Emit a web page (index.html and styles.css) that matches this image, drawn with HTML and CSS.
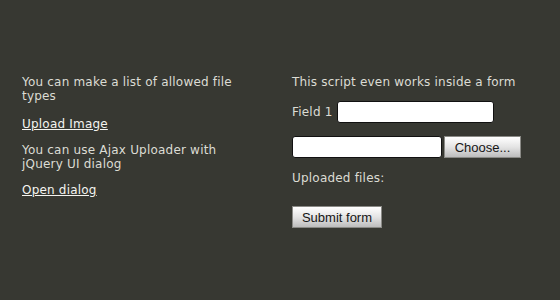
FILE: index.html
```html
<!DOCTYPE html>
<html>
<head>
    <title>Ajax Uploader</title>
    <link rel="stylesheet" href="styles.css">
</head>
<body>
    <div class="wrapper">
        <div class="column">
            <p>You can make a list of allowed file types</p>
            <p><a href="#" class="link">Upload Image</a></p>
            <p>You can use Ajax Uploader with jQuery UI dialog</p>
            <p><a href="#" class="link">Open dialog</a></p>
        </div>
        <div class="column">
            <form>
                <p>This script even works inside a form</p>
                <div class="form-row">
                    <label for="field1">Field 1</label>
                    <input type="text" id="field1" class="field-short">
                </div>
                <div class="form-row">
                    <input type="text" class="field-file">
                    <button type="button" class="btn btn-choose">Choose...</button>
                </div>
                <p>Uploaded files:</p>
                <ul class="files"></ul>
                <button type="button" class="btn btn-submit">Submit form</button>
            </form>
        </div>
    </div>
</body>
</html>
```

FILE: styles.css
```css
body {
    margin: 0;
    background-color: #373832;
    color: #dcdcd4;
    font-family: "DejaVu Sans", Verdana, sans-serif;
    font-size: 12px;
    letter-spacing: 0.2px;
    line-height: 14px;
}

.wrapper {
    display: grid;
    grid-template-columns: 270px 1fr;
    padding: 75px 0 0 22px;
}

.column p {
    margin: 0 0 12px 0;
}

.column:first-child p {
    width: 238px;
}

.column:first-child p:first-child {
    margin-bottom: 14px;
}

.link {
    color: #f4f4f0;
    text-decoration: underline;
}

.form-row {
    display: flex;
    align-items: center;
    gap: 2px;
    margin-bottom: 13px;
}

.form-row label {
    margin-right: 2px;
}

input[type="text"] {
    height: 22px;
    box-sizing: border-box;
    border: 1px solid #111;
    border-radius: 3px;
    background: #fff;
    padding: 2px 4px;
}

.field-short {
    width: 157px;
}

.field-file {
    width: 150px;
}

.btn {
    height: 22px;
    box-sizing: border-box;
    padding: 0;
    font-family: "Liberation Sans", Arial, sans-serif;
    font-size: 13px;
    letter-spacing: 0;
    color: #151515;
    border: 1px solid #8a8a86;
    background: linear-gradient(#ffffff, #e4e4e4 50%, #bdbdbd);
    cursor: pointer;
}

.btn-choose {
    width: 77px;
}

.btn-submit {
    width: 90px;
    margin-top: 9px;
}

.files {
    margin: 0;
    padding: 0;
}
```
